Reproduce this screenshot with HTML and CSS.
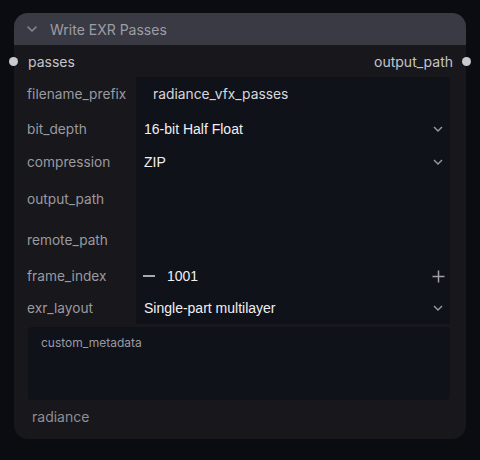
FILE: index.html
```html
<!DOCTYPE html>
<html>
<head>
<meta charset="utf-8">
<link rel="stylesheet" href="styles.css">
</head>
<body>
<div class="node">
  <div class="header">
    <svg class="collapse" width="12" height="8" viewBox="0 0 12 8"><path d="M2 2 L6 6 L10 2" fill="none" stroke="#8a8a94" stroke-width="1.5" stroke-linecap="round" stroke-linejoin="round"/></svg>
    <span class="title">Write EXR Passes</span>
  </div>
  <div class="io">
    <span class="dot dot-left"></span>
    <span class="io-label">passes</span>
    <span class="io-label">output_path</span>
    <span class="dot dot-right"></span>
  </div>
  <div class="widgets">
    <div class="row h34"><span class="label">filename_prefix</span><div class="field text"><span class="val">radiance_vfx_passes</span></div></div>
    <div class="row h35"><span class="label">bit_depth</span><div class="field combo"><span class="val">16-bit Half Float</span><svg class="chev" width="10" height="6" viewBox="0 0 10 6"><path d="M1 1 L5 5 L9 1" fill="none" stroke="#9a9aa2" stroke-width="1.4"/></svg></div></div>
    <div class="row h32"><span class="label">compression</span><div class="field combo"><span class="val">ZIP</span><svg class="chev" width="10" height="6" viewBox="0 0 10 6"><path d="M1 1 L5 5 L9 1" fill="none" stroke="#9a9aa2" stroke-width="1.4"/></svg></div></div>
    <div class="row h42"><span class="label">output_path</span><div class="field"></div></div>
    <div class="row h40"><span class="label">remote_path</span><div class="field"></div></div>
    <div class="row h32"><span class="label">frame_index</span><div class="field num"><span class="minus"></span><span class="val">1001</span><svg class="plus" width="13" height="13" viewBox="0 0 13 13"><path d="M6.5 0.5 V12.5 M0.5 6.5 H12.5" stroke="#a0a0a8" stroke-width="1.5"/></svg></div></div>
    <div class="row h32"><span class="label">exr_layout</span><div class="field combo"><span class="val">Single-part multilayer</span><svg class="chev" width="10" height="6" viewBox="0 0 10 6"><path d="M1 1 L5 5 L9 1" fill="none" stroke="#9a9aa2" stroke-width="1.4"/></svg></div></div>
  </div>
  <div class="textarea"><span class="ph">custom_metadata</span></div>
  <div class="footer"><span class="foot-label">radiance</span></div>
</div>
</body>
</html>
```
FILE: styles.css
```css
* { box-sizing: border-box; }
html, body { margin: 0; padding: 0; }
body {
  width: 480px;
  height: 460px;
  background: #0b0c12;
  font-family: Inter, "Noto Sans", sans-serif;
  padding: 13px 14px 0 14px;
}
.node {
  width: 452px;
  height: 426px;
  background: #18171b;
  border-radius: 14px;
  position: relative;
  display: flex;
  flex-direction: column;
}
.header {
  height: 32px;
  background: #3a3a44;
  border-radius: 14px 14px 0 0;
  display: flex;
  align-items: center;
  padding-left: 12px;
}
.collapse { margin-right: 12px; }
.title {
  color: #9d9da6;
  font-size: 14px;
}
.io {
  height: 32px;
  display: flex;
  align-items: center;
  justify-content: space-between;
  position: relative;
  padding: 0 13px 0 14px;
}
.io-label { color: #c4c4ca; font-size: 14px; }
.dot {
  position: absolute;
  width: 9px;
  height: 9px;
  border-radius: 50%;
  background: #c9c9ce;
  top: 11.5px;
}
.dot-left { left: -5px; }
.dot-right { right: -5px; }
.widgets {
  display: flex;
  flex-direction: column;
}
.row {
  display: grid;
  grid-template-columns: 122px 314px;
  align-items: stretch;
}
.h34 { height: 34px; }
.h35 { height: 35px; }
.h32 { height: 32px; }
.h42 { height: 42px; }
.h40 { height: 40px; }
.label {
  color: #9a9aa1;
  font-size: 13.7px;
  padding-left: 13px;
  display: flex;
  align-items: center;
}
.field {
  background: #10121a;
  display: flex;
  align-items: center;
  color: #f0f0f2;
  font-family: "Liberation Sans", Arial, sans-serif;
  font-size: 14px;
}
.text { padding-left: 17px; font-family: Inter, "Noto Sans", sans-serif; font-size: 13.8px; }
.text .val { color: #d8d8dc; }
.combo { padding-left: 8px; padding-right: 6px; justify-content: space-between; }
.chev { margin-right: 1px; }
.num { padding-left: 7px; padding-right: 5px; }
.minus {
  width: 12px;
  height: 1.5px;
  background: #a8a8b0;
  margin-right: 12px;
}
.num .val { flex: 1; }
.textarea {
  margin: 3px 16px 0 14px;
  height: 73px;
  background: #10121a;
  border-radius: 4px;
  padding: 4px 13px;
}
.ph { color: #9a9aa2; font-size: 12px; }
.footer {
  flex: 1;
  display: flex;
  align-items: center;
  padding-left: 18px;
  padding-bottom: 6px;
}
.foot-label { color: #8e8e96; font-size: 14px; }
```
